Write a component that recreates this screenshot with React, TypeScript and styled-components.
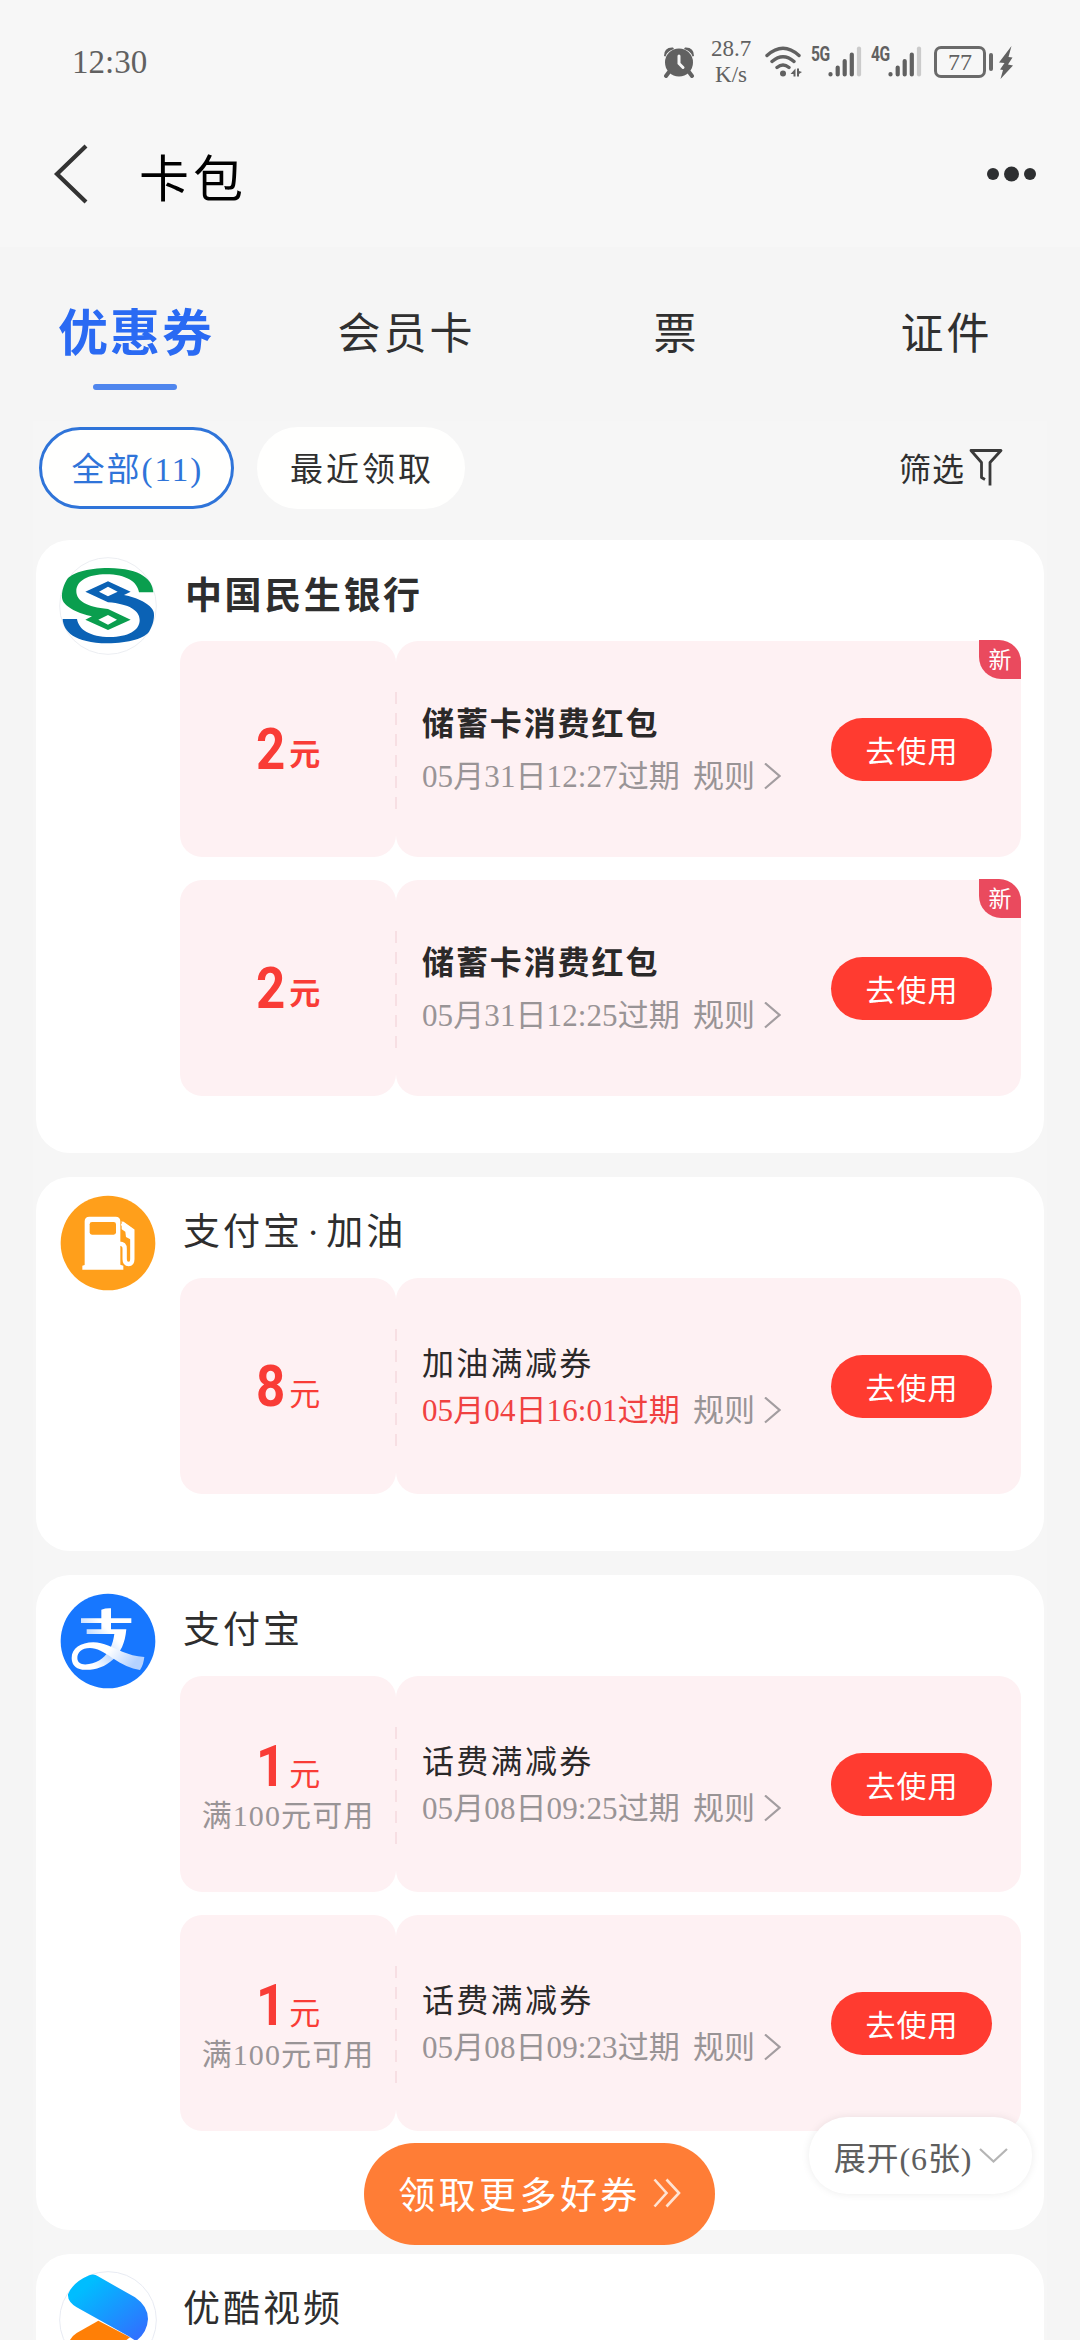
import React from "react";
import styled, { createGlobalStyle, css } from "styled-components";

const GlobalStyle = createGlobalStyle`
  * { box-sizing: border-box; }
  body {
    margin: 0;
    background: #f5f5f5;
    font-family: "Liberation Serif", "Noto Sans CJK SC", serif;
    color: #2f2f2f;
  }
  svg { display: block; flex: none; }
`;

const Screen = styled.div`
  position: relative;
  width: 1080px;
  height: 2340px;
  overflow: hidden;
  display: flex;
  flex-direction: column;
`;

/* ---------- status bar ---------- */

const StatusBar = styled.div`
  height: 123px;
  flex: none;
  padding: 0 67px 0 72px;
  background: #f7f7f7;
  display: flex;
  align-items: center;
  justify-content: space-between;
  color: #616161;
`;

const Clock = styled.span`
  font-size: 33px;
  line-height: 40px;
`;

const StatusIcons = styled.div`
  display: flex;
  align-items: center;
`;

const NetSpeed = styled.div`
  width: 56px;
  margin: 0 6px 0 8px;
  font-size: 23px;
  line-height: 26px;
  text-align: center;
`;

const Signal = styled.div`
  display: flex;
  align-items: flex-start;
  height: 31px;
  margin-left: 9px;
`;

const SignalLabel = styled.span`
  width: 17px;
  font: 700 20px/17px Roboto, sans-serif;
  letter-spacing: -0.5px;
  display: flex;
  transform: scaleX(0.78);
  transform-origin: left center;
`;

const Battery = styled.div`
  width: 52px;
  height: 32px;
  margin-left: 12px;
  border: 3px solid #6a6a6a;
  border-radius: 7px;
  font-size: 24px;
  line-height: 27px;
  text-align: center;
`;

const BatteryNub = styled.div`
  width: 4px;
  height: 18px;
  margin: 0 6px 0 3px;
  border-radius: 2px;
  background: #6a6a6a;
`;

/* ---------- header ---------- */

const Header = styled.header`
  height: 124px;
  flex: none;
  padding: 0 43px 23px 52px;
  background: #f7f7f7;
  display: flex;
  align-items: center;
`;

const Title = styled.h1`
  margin: 12px 0 0 51px;
  flex: 1;
  font-size: 50px;
  line-height: 60px;
  font-weight: 400;
  letter-spacing: 4px;
  color: #000;
`;

/* ---------- tabs ---------- */

const Tabs = styled.nav`
  flex: none;
  height: 174px;
  display: grid;
  grid-template-columns: repeat(4, 270px);
`;

const Tab = styled.div<{ $active?: boolean }>`
  display: flex;
  flex-direction: column;
  align-items: center;
  padding-top: 56px;
  font-size: 43px;
  line-height: 64px;
  letter-spacing: 3px;
  text-indent: 3px;
  color: #303030;
  ${(p) =>
    p.$active &&
    css`
      padding-top: 55px;
      font-size: 50px;
      letter-spacing: 2px;
      text-indent: 2px;
      font-weight: 700;
      color: #2a6af3;
      &::after {
        content: "";
        width: 84px;
        height: 6px;
        margin-top: 18px;
        border-radius: 3px;
        background: #4f86ee;
      }
    `}
`;

/* ---------- filter row ---------- */

const Body = styled.main`
  flex: 1;
  margin: 0 33px;
  padding: 0 3px;
  background: #f6f6f6;
`;

const Filters = styled.div`
  height: 119px;
  padding: 6px 41px 0 3px;
  display: flex;
  align-items: flex-start;
`;

const Chip = styled.div<{ $w: number; $active?: boolean }>`
  width: ${(p) => p.$w}px;
  height: 82px;
  margin-right: 23px;
  border: 3px solid ${(p) => (p.$active ? "#2f74d9" : "#fffffe")};
  border-radius: 41px;
  background: #fffffe;
  color: ${(p) => (p.$active ? "#2f74d9" : "#303030")};
  font-size: 33px;
  letter-spacing: ${(p) => (p.$active ? 2 : 3)}px;
  padding: 0 0 3px 2px;
  display: flex;
  align-items: center;
  justify-content: center;
`;

const FilterButton = styled.div`
  height: 80px;
  margin-left: auto;
  display: flex;
  align-items: center;
  gap: 4px;
  font-size: 32px;
  letter-spacing: 1px;
`;

/* ---------- merchant card ---------- */

const Card = styled.section<{ $foot: number }>`
  position: relative;
  display: flex;
  padding: 0 23px ${(p) => p.$foot}px 24px;
  margin-bottom: 24px;
  border-radius: 34px;
  background: #fff;
`;

const Logo = styled.div`
  width: 96px;
  height: 97px;
  margin-top: 17px;
  flex: none;
  display: flex;
  align-items: center;
  justify-content: center;
`;

const CardMain = styled.div`
  flex: 1;
  margin-left: 24px;
`;

const CardTitle = styled.h2<{ $bold?: boolean }>`
  margin: 0;
  height: 101px;
  padding: ${(p) => (p.$bold ? 29 : 28)}px 0 0 ${(p) => (p.$bold ? 5 : 3)}px;
  font-size: 37px;
  line-height: 56px;
  font-weight: ${(p) => (p.$bold ? 700 : 400)};
  letter-spacing: ${(p) => (p.$bold ? 2.6 : 3)}px;
  color: #2e2e2e;
`;

const MiddleDot = styled.span`
  margin: 0 4px;
`;

const Coupons = styled.div`
  display: flex;
  flex-direction: column;
  gap: 23px;
`;

const CouponBox = styled.div`
  position: relative;
  height: 216px;
  display: grid;
  grid-template-columns: 216px 1fr;
`;

const Worth = styled.div<{ $stacked?: boolean }>`
  border-radius: 22px;
  background: #fef1f3;
  padding: ${(p) => (p.$stacked ? 6 : 0)}px 2px 0 0;
  display: flex;
  flex-direction: column;
  align-items: center;
  justify-content: center;
`;

const Amount = styled.div<{ $bold?: boolean }>`
  display: flex;
  align-items: baseline;
  height: 54px;
  line-height: 54px;
  color: #f93c36;
  font-size: 31px;
  font-weight: ${(p) => (p.$bold ? 700 : 400)};
  gap: 2px;
`;

const Unit = styled.span<{ $bold?: boolean }>`
  padding-bottom: ${(p) => (p.$bold ? 4 : 1)}px;
  transform: translateY(${(p) => (p.$bold ? -4 : -1)}px);
`;

const Digit = styled.span`
  font: 700 58px/54px Roboto, sans-serif;
  transform: scaleX(0.88);
`;

const Condition = styled.div`
  height: 40px;
  margin-top: 3px;
  line-height: 40px;
  font-size: 30px;
  letter-spacing: 1.1px;
  text-indent: 2px;
  color: #999496;
`;

const Detail = styled.div`
  position: relative;
  border-radius: 22px;
  background: #fef1f3;
  padding: 0 29px 0 26px;
  display: flex;
  align-items: center;
  justify-content: space-between;
`;

/* perforation between the two halves of a coupon */
const Perforation = styled.div`
  position: absolute;
  left: -1px;
  top: 51px;
  width: 2px;
  height: 117px;
  background: repeating-linear-gradient(#f7dfe3 0 12px, transparent 12px 21px);
`;

const Info = styled.div<{ $bold?: boolean }>`
  display: flex;
  flex-direction: column;
  gap: ${(p) => (p.$bold ? 13 : 7)}px;
  padding-top: 2px;
`;

const Name = styled.div<{ $bold?: boolean }>`
  height: 40px;
  line-height: 40px;
  font-size: 32px;
  font-weight: ${(p) => (p.$bold ? 700 : 400)};
  letter-spacing: ${(p) => (p.$bold ? 1.9 : 2.3)}px;
  color: #2b2929;
`;

const Expiry = styled.div`
  display: flex;
  align-items: center;
  height: 40px;
  line-height: 40px;
  font-size: 31px;
  color: #999496;
`;

const ExpiryDate = styled.span<{ $soon?: boolean }>`
  width: 271px;
  white-space: nowrap;
  letter-spacing: 0.1px;
  color: ${(p) => (p.$soon ? "#f04141" : "inherit")};
`;

const RuleLink = styled.span`
  display: flex;
  align-items: center;
  gap: 9px;
`;

const UseButton = styled.div`
  width: 161px;
  height: 63px;
  border-radius: 32px;
  background: #ff3b30;
  color: #fff;
  font-size: 30px;
  letter-spacing: 1px;
  padding-left: 1px;
  display: flex;
  align-items: center;
  justify-content: center;
`;

const NewBadge = styled.div`
  position: absolute;
  top: -1px;
  right: 0;
  width: 42px;
  height: 39px;
  border-radius: 0 22px 0 22px;
  background: #ea4a5e;
  color: #fff;
  font-size: 23px;
  line-height: 41px;
  text-align: center;
`;

/* ---------- floating controls ---------- */

const ExpandPill = styled.div`
  position: absolute;
  right: 12px;
  bottom: 36px;
  width: 223px;
  height: 77px;
  border-radius: 38px;
  background: #fff;
  box-shadow: 0 0 8px rgba(0, 0, 0, 0.08);
  padding-left: 1px;
  display: flex;
  align-items: center;
  justify-content: center;
  gap: 7px;
  font-size: 32px;
  letter-spacing: 0.9px;
  color: #5e5e5e;
`;

const MoreButton = styled.div`
  position: absolute;
  left: 364px;
  top: 2143px;
  width: 351px;
  height: 102px;
  border-radius: 51px;
  background: #ff7d36;
  color: #fff;
  font-size: 37px;
  letter-spacing: 3.4px;
  padding-bottom: 3px;
  display: flex;
  align-items: center;
  justify-content: center;
  gap: 12px;
`;

/* ---------- icons ---------- */

const AlarmIcon = () => (
  <svg width="32" height="32" viewBox="0 0 32 32" fill="#616161">
    <circle cx="16" cy="16.5" r="14" />
    <path d="M1 10Q1 1 10 1.500L11 3Q4 5 2.500 10.500ZM31 10Q31 1 22 1.500L21 3Q28 5 29.500 10.500Z" />
    <path d="M6 26L3 30M26 26L29 30" stroke="#616161" strokeWidth="4" strokeLinecap="round" />
    <path d="M16 10V17.500L20 21.500" stroke="#f7f7f7" strokeWidth="3" fill="none" strokeLinecap="round" />
  </svg>
);

const WifiIcon = () => (
  <svg width="37" height="32" viewBox="0 0 37 32" fill="none" stroke="#616161" strokeWidth="3.4" strokeLinecap="round">
    <path d="M2 9.500Q18 -5 34 9.500M7 15.500Q18 6 29 15.500M12 21.500Q18 16.500 24 21.500" />
    <circle cx="18" cy="27.500" r="3" fill="#616161" stroke="none" />
    <path d="M30.500 22.500V30.500H28.500V28H25.500ZM32 22.500H34V25L37 26L34 28V30.500H32Z" fill="#616161" stroke="none" />
  </svg>
);

const BarsIcon = () => (
  <svg width="34" height="31" viewBox="0 0 34 31" strokeWidth="4.200" strokeLinecap="round" stroke="#616161">
    <path d="M2.500 28V28.500M9.700 21.500V28.500M16.700 15V28.500M23.800 8.500V28.500" />
    <path d="M31 2.500V28.500" stroke="#cbcbcb" />
  </svg>
);

const BoltIcon = () => (
  <svg width="14" height="34" viewBox="0 0 14 34" fill="#616161">
    <path d="M12.500 1L0 17.500L5.500 18L1 24.500L4 25L1.500 34L14 20.500L9 19.500L13.500 12.500L9.500 12Z" />
  </svg>
);

const BackIcon = () => (
  <svg width="36" height="60" viewBox="0 0 36 60" fill="none" stroke="#333" strokeWidth="4.200">
    <path d="M34 2L5 30L34 58" />
  </svg>
);

const MoreIcon = () => (
  <svg width="50" height="16" viewBox="0 0 50 16" fill="#2d2f31">
    <circle cx="6" cy="8" r="6" />
    <circle cx="24.500" cy="8" r="7.500" />
    <circle cx="43" cy="8" r="6" />
  </svg>
);

const FunnelIcon = () => (
  <svg width="34" height="38" viewBox="0 0 34 38" fill="none" stroke="#3a3a3a" strokeWidth="2.800" strokeLinejoin="round">
    <path d="M21 37.500V14.500L32 2.500H2L12.500 14.500V29.500L16 31.500" />
  </svg>
);

const ChevronRight = () => (
  <svg width="17" height="28" viewBox="0 0 17 28" fill="none" stroke="#a39da0" strokeWidth="2.200">
    <path d="M1 0.500L15.500 13L1 25.500" />
  </svg>
);

const ChevronDown = () => (
  <svg width="29" height="15" viewBox="0 0 29 15" fill="none" stroke="#b5b5b5" strokeWidth="2.200">
    <path d="M1 1L14.500 13.500L28 1" />
  </svg>
);

const DoubleChevron = () => (
  <svg width="28" height="30" viewBox="0 0 28 30" fill="none" stroke="#ffe3d2" strokeWidth="2.600">
    <path d="M1.500 1.500L13.500 15L1.500 28.500M13.500 1.500L26 15L13.500 28.500" />
  </svg>
);

const sWave =
  "M370 187C368 150 335 115 236 114C170 114 122 130 110 150C97 172 94 195 97 208C103 232 150 252 186 259L166 269L234 300L302 269L234 237C170 232 139 212 139 184C139 152 175 133 228 133C288 133 322 155 327 187ZM205 269L234 255L261 269L234 284Z";

const MinshengLogo = () => (
  <svg width="98" height="98" viewBox="87 81 294 294">
    <circle cx="234" cy="228" r="145" fill="#fff" stroke="#eceef2" strokeWidth="3" />
    <path d={sWave} fill="#0a9e4e" fillRule="evenodd" />
    <path d={sWave} fill="#0b62b5" fillRule="evenodd" transform="rotate(180 234 227)" />
  </svg>
);

const FuelLogo = () => (
  <svg width="96" height="96" viewBox="90 133 288 288">
    <circle cx="234" cy="277" r="142" fill="#ff9f1b" />
    <path d="M164 343V212Q164 198 178 198H257Q271 198 271 212V342L280 345V357H157V345Z" fill="#fff" />
    <rect x="179" y="214" width="79" height="38" rx="7" fill="#ff9f1b" />
    <path d="M276 218L307 240V326Q307 340 296 340Q284 340 284 326V294Q284 279 268 279" fill="none" stroke="#fff" strokeWidth="13" />
    <path d="M275 211L305 232V268L288 259L286 243L275 236Z" fill="#fff" />
  </svg>
);

const AlipayLogo = () => (
  <svg width="96" height="96" viewBox="18 13 288 288">
    <defs>
      <linearGradient id="tail" x1="0" y1="0" x2="1" y2="0.3">
        <stop offset="0.550" stopColor="#fff" />
        <stop offset="1" stopColor="#b4d2ff" />
      </linearGradient>
      <linearGradient id="bend" gradientUnits="userSpaceOnUse" x1="205" y1="150" x2="110" y2="240">
        <stop offset="0.100" stopColor="#fff" />
        <stop offset="0.500" stopColor="#c4dcff" />
        <stop offset="0.900" stopColor="#fff" />
      </linearGradient>
    </defs>
    <circle cx="162" cy="157" r="142" fill="#1777ff" />
    <path d="M142 63Q156 58 171 59V89H232V103H171V122H217C213 165 200 190 178 212C150 238 118 246 85 243C62 240 53 225 53 208H70C70 224 85 230 105 226C135 222 158 200 168 180C176 165 179 150 181 136H98V122H142V103H81V89H142Z" fill="url(#bend)" />
    <path d="M53 208C53 180 80 161 118 161C150 162 175 177 205 189C225 197 245 203 271 205C269 220 266 232 258 244C230 240 205 228 175 208C150 190 128 178 108 178C82 178 70 192 70 208Z" fill="url(#tail)" />
  </svg>
);

const YoukuLogo = () => (
  <svg width="98" height="98" viewBox="87 516 294 294">
    <defs>
      <linearGradient id="yk" x1="0" y1="0" x2="1" y2="1">
        <stop offset="0.200" stopColor="#00bdff" />
        <stop offset="0.900" stopColor="#2f72ff" />
      </linearGradient>
    </defs>
    <circle cx="234" cy="663" r="145" fill="#fff" stroke="#e8ebf3" strokeWidth="3" />
    <path d="M205 665L300 715L200 790Q140 800 118 745Q112 720 140 702Z" fill="#ff7f06" />
    <path d="M178 529Q192 523 204 532L315 595Q354 622 354 660Q352 700 318 726L296 712L140 625Q112 608 114 586Q128 550 178 529Z" fill="url(#yk)" />
  </svg>
);

/* ---------- content ---------- */

interface CouponData {
  amount: string;
  condition?: string;
  name: string;
  expiry: string;
  soon?: boolean;
  isNew?: boolean;
}

const Coupon = ({ data, bold }: { data: CouponData; bold?: boolean }) => (
  <CouponBox>
    <Worth $stacked={!!data.condition}>
      <Amount>
        <Digit>{data.amount}</Digit>
        <Unit $bold={bold} as={bold ? "b" : "span"}>
          元
        </Unit>
      </Amount>
      {data.condition && <Condition>{data.condition}</Condition>}
    </Worth>
    <Detail>
      <Perforation />
      <Info $bold={bold}>
        <Name $bold={bold}>{data.name}</Name>
        <Expiry>
          <ExpiryDate $soon={data.soon}>{data.expiry}过期</ExpiryDate>
          <RuleLink>
            规则
            <ChevronRight />
          </RuleLink>
        </Expiry>
      </Info>
      <UseButton>去使用</UseButton>
      {data.isNew && <NewBadge>新</NewBadge>}
    </Detail>
  </CouponBox>
);

interface MerchantProps {
  logo: React.ReactNode;
  title: React.ReactNode;
  bold?: boolean;
  foot: number;
  coupons: CouponData[];
  children?: React.ReactNode;
}

const Merchant = ({ logo, title, bold, foot, coupons, children }: MerchantProps) => (
  <Card $foot={foot}>
    <Logo>{logo}</Logo>
    <CardMain>
      <CardTitle $bold={bold}>{title}</CardTitle>
      <Coupons>
        {coupons.map((c) => (
          <Coupon key={c.expiry} data={c} bold={bold} />
        ))}
      </Coupons>
    </CardMain>
    {children}
  </Card>
);

export default function App() {
  return (
    <>
      <GlobalStyle />
      <Screen>
        <StatusBar>
          <Clock>12:30</Clock>
          <StatusIcons>
            <AlarmIcon />
            <NetSpeed>
              28.7
              <br />
              K/s
            </NetSpeed>
            <WifiIcon />
            <Signal>
              <SignalLabel>5G</SignalLabel>
              <BarsIcon />
            </Signal>
            <Signal>
              <SignalLabel>4G</SignalLabel>
              <BarsIcon />
            </Signal>
            <Battery>77</Battery>
            <BatteryNub />
            <BoltIcon />
          </StatusIcons>
        </StatusBar>
        <Header>
          <BackIcon />
          <Title>卡包</Title>
          <MoreIcon />
        </Header>
        <Tabs>
          <Tab $active>优惠券</Tab>
          <Tab>会员卡</Tab>
          <Tab>票</Tab>
          <Tab>证件</Tab>
        </Tabs>
        <Body>
          <Filters>
            <Chip $w={195} $active>
              全部(11)
            </Chip>
            <Chip $w={208}>最近领取</Chip>
            <FilterButton>
              筛选
              <FunnelIcon />
            </FilterButton>
          </Filters>
          <Merchant
            logo={<MinshengLogo />}
            title="中国民生银行"
            bold
            foot={57}
            coupons={[
              { amount: "2", name: "储蓄卡消费红包", expiry: "05月31日12:27", isNew: true },
              { amount: "2", name: "储蓄卡消费红包", expiry: "05月31日12:25", isNew: true },
            ]}
          />
          <Merchant
            logo={<FuelLogo />}
            title={
              <>
                支付宝<MiddleDot>·</MiddleDot>加油
              </>
            }
            foot={57}
            coupons={[{ amount: "8", name: "加油满减券", expiry: "05月04日16:01", soon: true }]}
          />
          <Merchant
            logo={<AlipayLogo />}
            title="支付宝"
            foot={99}
            coupons={[
              { amount: "1", condition: "满100元可用", name: "话费满减券", expiry: "05月08日09:25" },
              { amount: "1", condition: "满100元可用", name: "话费满减券", expiry: "05月08日09:23" },
            ]}
          >
            <ExpandPill>
              展开(6张)
              <ChevronDown />
            </ExpandPill>
          </Merchant>
          <Merchant logo={<YoukuLogo />} title="优酷视频" foot={57} coupons={[]} />
        </Body>
        <MoreButton>
          领取更多好券
          <DoubleChevron />
        </MoreButton>
      </Screen>
    </>
  );
}
